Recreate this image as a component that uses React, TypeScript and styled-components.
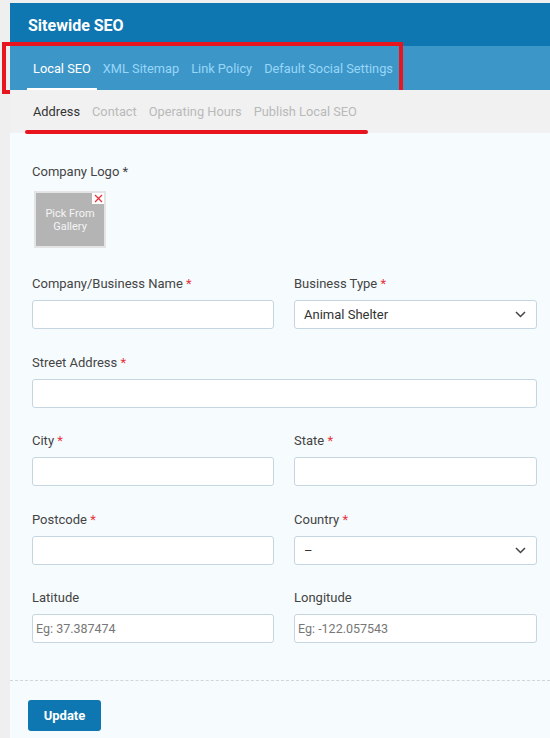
import React from "react";
import styled, { createGlobalStyle } from "styled-components";

const Global = createGlobalStyle`
  html, body { margin: 0; padding: 0; background: #efefef; }
  body { font-family: Roboto, "Noto Sans", Arial, sans-serif; }
  * { box-sizing: border-box; }
`;

const Page = styled.div`
  padding: 3px 0 0 10px;
  width: 550px;
  height: 738px;
  overflow: hidden;
`;

const Panel = styled.div`
  background: #f6fbfe;
  height: 735px;
  display: flex;
  flex-direction: column;
`;

const Header = styled.div`
  height: 43px;
  background: #0e76b1;
  color: #fff;
  font-weight: 700;
  font-size: 16px;
  display: flex;
  align-items: center;
  padding-left: 18px;
  padding-top: 1px;
`;

const TabBar = styled.div`
  position: relative;
  height: 44px;
  background: #3d96c8;
  display: flex;
  align-items: stretch;
  padding-left: 17px;
`;

const Tab = styled.div<{ $active?: boolean }>`
  display: flex;
  align-items: center;
  padding: 2px 6px 0;
  font-size: 12.8px;
  color: ${(p) => (p.$active ? "#ffffff" : "#97d6f8")};
  border-bottom: 2px solid ${(p) => (p.$active ? "#ffffff" : "transparent")};
`;

const RedBox = styled.div`
  position: absolute;
  left: -8px;
  top: -4px;
  width: 401px;
  height: 52px;
  border: 4px solid #e8141e;
  pointer-events: none;
`;

const SubBar = styled.div`
  position: relative;
  height: 43px;
  background: #f1f1f1;
  display: flex;
  align-items: center;
  padding-left: 17px;
`;

const SubTab = styled.div<{ $active?: boolean }>`
  padding: 0 6px;
  font-size: 12.8px;
  color: ${(p) => (p.$active ? "#333333" : "#b9b9b9")};
`;

const RedLine = styled.div`
  position: absolute;
  left: 15px;
  top: 40px;
  width: 343px;
  height: 4px;
  border-radius: 2px;
  background: #e8141e;
`;

const Body = styled.div`
  padding: 29px 13px 0 22px;
  display: flex;
  flex-direction: column;
`;

const Label = styled.div`
  font-size: 13px;
  color: #444;
  height: 18px;
  padding-top: 2px;
  line-height: 16px;
`;

const Star = styled.span`
  color: #e8333a;
`;

const LogoBox = styled.div`
  margin: 11px 0 0 2px;
  width: 72px;
  height: 57px;
  border: 2px solid #e4e4e4;
  background: #b4b4b4;
  position: relative;
  display: flex;
  align-items: center;
  justify-content: center;
  text-align: center;
  color: #f4f4f4;
  font-size: 11px;
  line-height: 13px;
`;

const CloseX = styled.div`
  position: absolute;
  right: 0;
  top: 0;
  width: 12px;
  height: 11px;
  background: #fff;
  display: flex;
  align-items: center;
  justify-content: center;
`;

const Row = styled.div<{ $mt: number; $single?: boolean }>`
  display: grid;
  grid-template-columns: ${(p) => (p.$single ? "505px" : "242px 243px")};
  column-gap: 20px;
  margin-top: ${(p) => p.$mt}px;
`;

const Field = styled.div`
  display: flex;
  flex-direction: column;
`;

const Input = styled.div<{ $placeholder?: boolean }>`
  margin-top: 8px;
  height: 29px;
  background: #fff;
  border: 1px solid #c5d6e2;
  border-radius: 3px;
  display: flex;
  align-items: center;
  justify-content: space-between;
  padding: 0 10px 0 3px;
  font-size: 12.5px;
  color: ${(p) => (p.$placeholder ? "#777" : "#333")};
`;

const SelectText = styled.span`
  padding-left: 6px;
  font-size: 13px;
  color: #333;
`;

const Divider = styled.div`
  margin-top: 37px;
  border-top: 1px dashed #cfd6dc;
`;

const Footer = styled.div`
  padding: 19px 0 0 18px;
`;

const Button = styled.button`
  width: 73px;
  height: 31px;
  background: #0e76b1;
  color: #fff;
  border: none;
  border-radius: 3px;
  font-family: inherit;
  font-weight: 700;
  font-size: 13px;
`;

const Chevron = () => (
  <svg width="11" height="7" viewBox="0 0 11 7">
    <path d="M1 1 L5.5 5.5 L10 1" stroke="#444" strokeWidth="1.5" fill="none" />
  </svg>
);

const Req = ({ children }: { children: React.ReactNode }) => (
  <Label>
    {children} <Star>*</Star>
  </Label>
);

export default function App() {
  return (
    <>
      <Global />
      <Page>
        <Panel>
          <Header>Sitewide SEO</Header>
          <TabBar>
            <RedBox />
            <Tab $active>Local SEO</Tab>
            <Tab>XML Sitemap</Tab>
            <Tab>Link Policy</Tab>
            <Tab>Default Social Settings</Tab>
          </TabBar>
          <SubBar>
            <SubTab $active>Address</SubTab>
            <SubTab>Contact</SubTab>
            <SubTab>Operating Hours</SubTab>
            <SubTab>Publish Local SEO</SubTab>
            <RedLine />
          </SubBar>
          <Body>
            <Label>Company Logo *</Label>
            <LogoBox>
              Pick From
              <br />
              Gallery
              <CloseX>
                <svg width="9" height="9" viewBox="0 0 9 9">
                  <path d="M1 1 L8 8 M8 1 L1 8" stroke="#e8333a" strokeWidth="1.3" />
                </svg>
              </CloseX>
            </LogoBox>
            <Row $mt={26}>
              <Field>
                <Req>Company/Business Name</Req>
                <Input />
              </Field>
              <Field>
                <Req>Business Type</Req>
                <Input>
                  <SelectText>Animal Shelter</SelectText>
                  <Chevron />
                </Input>
              </Field>
            </Row>
            <Row $mt={24} $single>
              <Field>
                <Req>Street Address</Req>
                <Input />
              </Field>
            </Row>
            <Row $mt={23}>
              <Field>
                <Req>City</Req>
                <Input />
              </Field>
              <Field>
                <Req>State</Req>
                <Input />
              </Field>
            </Row>
            <Row $mt={24}>
              <Field>
                <Req>Postcode</Req>
                <Input />
              </Field>
              <Field>
                <Req>Country</Req>
                <Input>
                  <SelectText>–</SelectText>
                  <Chevron />
                </Input>
              </Field>
            </Row>
            <Row $mt={23}>
              <Field>
                <Label>Latitude</Label>
                <Input $placeholder>Eg: 37.387474</Input>
              </Field>
              <Field>
                <Label>Longitude</Label>
                <Input $placeholder>Eg: -122.057543</Input>
              </Field>
            </Row>
          </Body>
          <Divider />
          <Footer>
            <Button>Update</Button>
          </Footer>
        </Panel>
      </Page>
    </>
  );
}
